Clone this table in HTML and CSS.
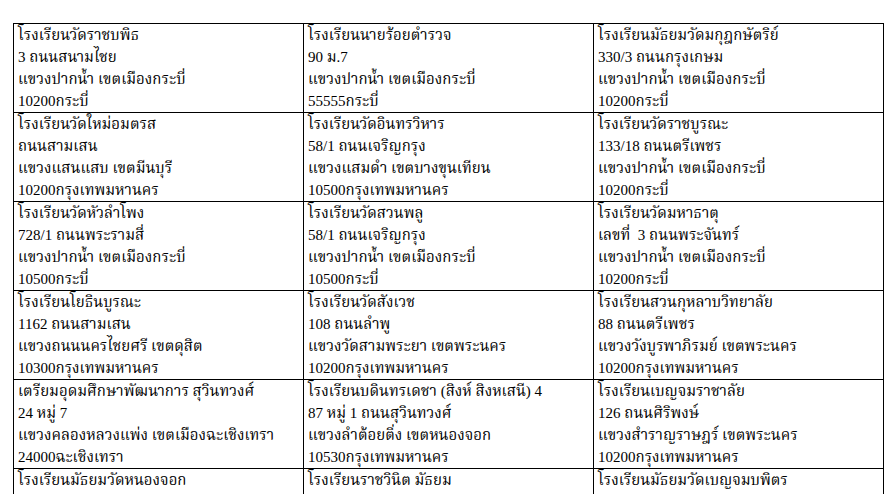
FILE: index.html
```html
<!DOCTYPE html>
<html lang="th">
<head>
<meta charset="utf-8">
<title>รายชื่อโรงเรียน</title>
<link rel="stylesheet" href="styles.css">
</head>
<body>
<table class="schools">
<tr>
<td>โรงเรียนวัดราชบพิธ<br>3 ถนนสนามไชย<br>แขวงปากน้ำ เขตเมืองกระบี่<br>10200กระบี่</td>
<td>โรงเรียนนายร้อยตำรวจ<br>90 ม.7<br>แขวงปากน้ำ เขตเมืองกระบี่<br>55555กระบี่</td>
<td>โรงเรียนมัธยมวัดมกุฎกษัตริย์<br>330/3 ถนนกรุงเกษม<br>แขวงปากน้ำ เขตเมืองกระบี่<br>10200กระบี่</td>
</tr>
<tr>
<td>โรงเรียนวัดใหม่อมตรส<br>ถนนสามเสน<br>แขวงแสนแสบ เขตมีนบุรี<br>10200กรุงเทพมหานคร</td>
<td>โรงเรียนวัดอินทรวิหาร<br>58/1 ถนนเจริญกรุง<br>แขวงแสมดำ เขตบางขุนเทียน<br>10500กรุงเทพมหานคร</td>
<td>โรงเรียนวัดราชบูรณะ<br>133/18 ถนนตรีเพชร<br>แขวงปากน้ำ เขตเมืองกระบี่<br>10200กระบี่</td>
</tr>
<tr>
<td>โรงเรียนวัดหัวลำโพง<br>728/1 ถนนพระรามสี่<br>แขวงปากน้ำ เขตเมืองกระบี่<br>10500กระบี่</td>
<td>โรงเรียนวัดสวนพลู<br>58/1 ถนนเจริญกรุง<br>แขวงปากน้ำ เขตเมืองกระบี่<br>10500กระบี่</td>
<td>โรงเรียนวัดมหาธาตุ<br>เลขที่&nbsp; 3 ถนนพระจันทร์<br>แขวงปากน้ำ เขตเมืองกระบี่<br>10200กระบี่</td>
</tr>
<tr>
<td>โรงเรียนโยธินบูรณะ<br>1162 ถนนสามเสน<br>แขวงถนนนครไชยศรี เขตดุสิต<br>10300กรุงเทพมหานคร</td>
<td>โรงเรียนวัดสังเวช<br>108 ถนนลำพู<br>แขวงวัดสามพระยา เขตพระนคร<br>10200กรุงเทพมหานคร</td>
<td>โรงเรียนสวนกุหลาบวิทยาลัย<br>88 ถนนตรีเพชร<br>แขวงวังบูรพาภิรมย์ เขตพระนคร<br>10200กรุงเทพมหานคร</td>
</tr>
<tr>
<td>เตรียมอุดมศึกษาพัฒนาการ สุวินทวงศ์<br>24 หมู่ 7<br>แขวงคลองหลวงแพ่ง เขตเมืองฉะเชิงเทรา<br>24000ฉะเชิงเทรา</td>
<td>โรงเรียนบดินทรเดชา (สิงห์ สิงหเสนี) 4<br>87 หมู่ 1 ถนนสุวินทวงศ์<br>แขวงลำต้อยติ่ง เขตหนองจอก<br>10530กรุงเทพมหานคร</td>
<td>โรงเรียนเบญจมราชาลัย<br>126 ถนนศิริพงษ์<br>แขวงสำราญราษฎร์ เขตพระนคร<br>10200กรุงเทพมหานคร</td>
</tr>
<tr>
<td>โรงเรียนมัธยมวัดหนองจอก</td>
<td>โรงเรียนราชวินิต มัธยม</td>
<td>โรงเรียนมัธยมวัดเบญจมบพิตร</td>
</tr>
</table>
</body>
</html>
```
FILE: styles.css
```css
html, body {
  margin: 0;
  padding: 0;
  background: #fff;
  overflow: hidden;
}
body {
  padding: 23px 0 0 13px;
  font-family: "Liberation Serif", "Noto Serif Thai", "Noto Sans Thai", serif;
  font-size: 15px;
  color: #000;
}
.schools {
  border-collapse: collapse;
  width: 871px;
  table-layout: fixed;
}
.schools td {
  border: 1px solid #000;
  padding: 0 4px;
  line-height: 22px;
  height: 88px;
  vertical-align: top;
  white-space: nowrap;
  overflow: hidden;
}
```
